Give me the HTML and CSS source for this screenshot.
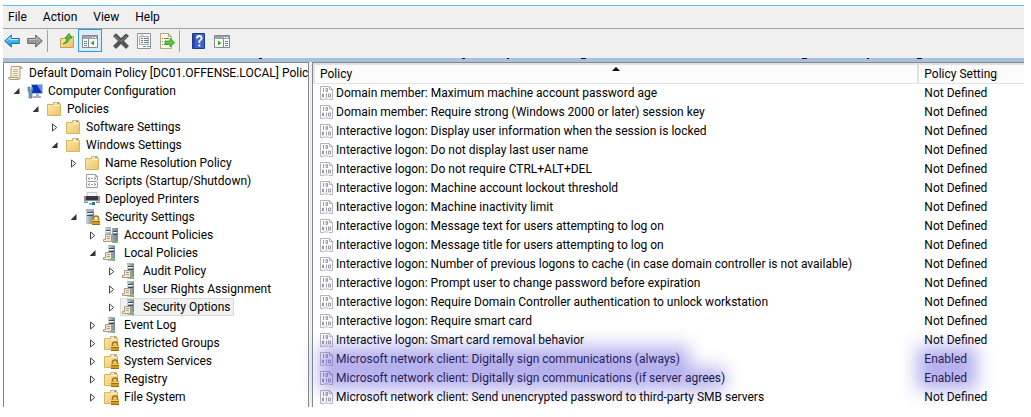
FILE: index.html
```html
<!DOCTYPE html>
<html lang="en">
<head>
<meta charset="utf-8">
<title>Group Policy Management Editor</title>
<link rel="stylesheet" href="styles.css">
</head>
<body>
<svg class="sprite" aria-hidden="true">
  <defs>
    <linearGradient id="gold" x1="0" y1="0" x2="1" y2="1"><stop offset="0" stop-color="#fdeab0"/><stop offset="1" stop-color="#e9c468"/></linearGradient>
    <linearGradient id="sky" x1="0" y1="0" x2="0" y2="1"><stop offset="0" stop-color="#7fd4ff"/><stop offset="1" stop-color="#148fdc"/></linearGradient>
    <linearGradient id="steel" x1="0" y1="0" x2="1" y2="0"><stop offset="0" stop-color="#c9d6dd"/><stop offset="1" stop-color="#71858f"/></linearGradient>
    <symbol id="folder" viewBox="0 0 16 16"><path d="M1.500 3.500h6v-2h6v2h1v11h-13z" fill="url(#gold)" stroke="#d9b261"/><path d="M9 2.500h4" stroke="#fff"/><path d="M11 2.500h2" stroke="#4aa3dc"/><path d="M8 4.500h6" stroke="#fff3c8"/></symbol>
    <symbol id="lock" viewBox="0 0 16 16"><path d="M9.500 11V9.500a2.500 2.500 0 0 1 5 0V11" fill="none" stroke="#a37414" stroke-width="1.500"/><path d="M8 10.500h8v5.500H8z" fill="#d69a1c"/><path d="M8 12.500h8M8 15.500h8" stroke="#9c6a10"/><path d="M8 11.500h8" stroke="#f4cf62"/></symbol>
    <symbol id="lockfolder" viewBox="0 0 16 16"><use href="#folder"/><use href="#lock"/></symbol>
    <symbol id="tower" viewBox="0 0 16 16"><path d="M2 0h8v15H2z" fill="url(#steel)"/><path d="M2 0h8v2H2z" fill="#a5b4bc"/><path d="M3 3.500h6M3 6.500h6" stroke="#43545e"/><path d="M3 4.500h6" stroke="#f5f9fb"/></symbol>
    <symbol id="security" viewBox="0 0 16 16"><use href="#tower"/><use href="#lock"/></symbol>
    <symbol id="paper" viewBox="0 0 16 16"><path d="M2.500 7.500h6v7h-8v-2h2z" fill="#f4ead0" stroke="#a59a80"/><path d="M4 9.500h3M4 11.500h3" stroke="#a59a80"/></symbol>
    <symbol id="server" viewBox="0 0 16 16"><path d="M5 0h7v16H5z" fill="url(#steel)"/><path d="M5 .5h7" stroke="#a5b4bc"/><path d="M6 3.500h5M6 6.500h5" stroke="#3e4d55"/><path d="M6 4.500h5" stroke="#fff"/><path d="M10 13h2v2h-2z" fill="#5fe02c"/><use href="#paper"/></symbol>
    <symbol id="servers" viewBox="0 0 16 16"><path d="M2 0h6v13H2zM9 1h6v15H9z" fill="url(#steel)"/><path d="M3 3.500h4M10 4.500h4M10 7.500h4" stroke="#3e4d55"/><path d="M3 4.500h4M10 5.500h4" stroke="#fff"/><path d="M13 14h2v2h-2z" fill="#5fe02c"/><use href="#paper"/></symbol>
    <symbol id="scroll" viewBox="0 0 16 16"><path d="M3.500 1.500h9q2 0 1.500 2h-2v9q0 2-2 2h-8q-2-.5-1.500-2h2.500v-9z" fill="#fbf3d8" stroke="#a99c78"/><path d="M12 3.500V1.500M2 14.500h8v-2H1" fill="none" stroke="#a99c78"/><path d="M5 4.500h5M5 6.500h5M5 8.500h5M5 10.500h5" stroke="#c2b48c"/></symbol>
    <symbol id="computer" viewBox="0 0 16 16"><path d="M4.500 1.500h11v9h-11z" fill="#0c2fc4" stroke="#b6c3d4"/><path d="M10 2h5v8z" fill="#5f8cf5"/><path d="M9 11h3v2H9zM6 13h8v2H6z" fill="#a8b1ba"/><path d="M1 4v4q0 1 1 1v6h3V9q1-1 1-2V4H5v3H3V4z" fill="#6aa4cd" stroke="#3b6486" stroke-width=".6"/></symbol>
    <symbol id="scripts" viewBox="0 0 16 16"><path d="M2.500 1.500h9l2 2v4l-1 1 1 1v5h-11v-5l1-1-1-1z" fill="#fff" stroke="#9a9a9a"/><path d="M11.500 1.500v2h2" fill="none" stroke="#9a9a9a"/><path d="M6 4.500l-2 1 2 1M10 4.500l2 1-2 1M7 5.500h2M6 10.500l-2 1 2 1M10 10.500l2 1-2 1M7 11.500h2M4 8.500h8" fill="none" stroke="#777" stroke-width=".8"/></symbol>
    <symbol id="printer" viewBox="0 0 16 16"><path d="M3 1.500h10V6H3z" fill="#f4f4f4" stroke="#aaa" stroke-width=".6"/><path d="M0 5h16v7H0z" fill="#8a8f94"/><path d="M2 5h12v4H2z" fill="#37393b"/><path d="M0 10.500h16" stroke="#c7cacc"/><path d="M4 10h8v5H4z" fill="#fff"/><path d="M5 12h3v2H5z" fill="#5bc3e8"/><path d="M8 11h3v3H8z" fill="#2278bd"/></symbol>
    <symbol id="binary" viewBox="0 0 14 14"><path d="M.5.500h9l3 3v10H9l-1-1-1.500 1-1.500-1-1.500 1H.5z" fill="#fff" stroke="#b3b3b8"/><path d="M9.500.500v3h3" fill="none" stroke="#b3b3b8"/><path d="M3.500 2v4M3.500 8h-1v3h1zM6 2.500h1.500v3H6zM6.500 7.500v4M8.500 8h2v3h-2z" fill="none" stroke="#9a97b0"/></symbol>
    <symbol id="back" viewBox="0 0 16 16"><path d="M.7 8l6.600-6v3.500h8v5h-8V14z" fill="url(#sky)" stroke="#1672ab"/><path d="M3 7.500l3.300-3v2h8" fill="none" stroke="#b9e8ff"/></symbol>
    <symbol id="forward" viewBox="0 0 16 16"><path d="M15.300 8L8.700 2v3.500h-8v5h8V14z" fill="#999" stroke="#686868"/><path d="M1.700 6.500h8v-2l3 3" fill="none" stroke="#c4c4c4"/></symbol>
    <symbol id="up" viewBox="0 0 16 16"><path d="M1.500 5.500h7l1-2h5v11h-13z" fill="url(#gold)" stroke="#cfa04a"/><path d="M4 11q4-2 4-6H6l4-4.500L13 5h-2.500Q10 10 4 11z" fill="#56c92c" stroke="#278d17" stroke-width=".8"/></symbol>
    <symbol id="paneleft" viewBox="0 0 16 16"><path d="M.5 2.500h15v12H.5z" fill="#fff" stroke="#85898d"/><path d="M1 3h14v3H1z" fill="#9da3a8"/><path d="M10 4.500h1M12 4.500h2" stroke="#fff"/><path d="M6.500 6v8" stroke="#85898d"/><path d="M2 8.500h3M2 10.500h3M2 12.500h3" stroke="#5e86a8"/><path d="M12 7.500v5L8.500 10z" fill="#2fae22"/></symbol>
    <symbol id="paneright" viewBox="0 0 16 16"><path d="M.5 2.500h15v12H.5z" fill="#fff" stroke="#85898d"/><path d="M1 3h14v3H1z" fill="#9da3a8"/><path d="M10 4.500h1M12 4.500h2" stroke="#fff"/><path d="M9.500 6v8" stroke="#85898d"/><path d="M11 8.500h3M11 10.500h3M11 12.500h3" stroke="#5e86a8"/><path d="M4 7.500v5L7.500 10z" fill="#2fae22"/></symbol>
    <symbol id="delete" viewBox="0 0 16 16"><path d="M.5 3L3 .8 8 5.500 13 1l2.500 2-5 5 5 5L13 15.500l-5-5-5 5L.5 13l5-5z" fill="#555" stroke="#333" stroke-width=".7"/><path d="M2 3l6 5.500L14 3" fill="none" stroke="#8a8a8a"/></symbol>
    <symbol id="properties" viewBox="0 0 16 16"><path d="M1.500.5h13v15h-13z" fill="#fff" stroke="#8d9195"/><path d="M3.500 3.500h9v8h-9z" fill="#f6f7f8" stroke="#a7abb0"/><path d="M4 2h4" stroke="#bbb"/><path d="M5 5.500h2M8 5.500h4M5 7.500h2M8 7.500h4M5 9.500h2M8 9.500h4" stroke="#74797e"/><path d="M7 13.500h3M11 13.500h3" stroke="#32a8e0"/></symbol>
    <symbol id="export" viewBox="0 0 16 16"><path d="M1.500.5h8l3 3v12h-11z" fill="#fffbe6" stroke="#b3a77e"/><path d="M9.500.5v3h3" fill="none" stroke="#b3a77e"/><path d="M3 5.500h1M5 5.500h5M3 8.500h1M3 11.500h1M5 11.500h4" stroke="#777"/><path d="M6 8h5V5.500l4.700 4.200L11 14v-2.500H6z" fill="#5acb37" stroke="#2d9a1e" stroke-width=".8"/></symbol>
    <symbol id="help" viewBox="0 0 16 16"><path d="M1.500.5h12v15h-12z" fill="#3e64cc" stroke="#1c3a93"/><path d="M2 1h2v14H2z" fill="#284ba8"/><path d="M6 5.500Q6 3 8.300 3t2.300 2.300Q10.600 7 8.400 8v2M8.400 11.500v2" fill="none" stroke="#fff" stroke-width="1.800"/></symbol>
  </defs>
</svg>

<div class="window">
  <nav class="menu" aria-label="Menu">
    <button>File</button><button>Action</button><button>View</button><button>Help</button>
  </nav>
  <div class="toolbar" role="toolbar" aria-label="Tools">
    <button aria-label="Back"><svg class="icon"><use href="#back"/></svg></button>
    <button aria-label="Forward"><svg class="icon"><use href="#forward"/></svg></button>
    <span class="sep"></span>
    <button aria-label="Up one level"><svg class="icon"><use href="#up"/></svg></button>
    <button class="pressed" aria-label="Show console tree" aria-pressed="true"><svg class="icon"><use href="#paneleft"/></svg></button>
    <button aria-label="Delete"><svg class="icon"><use href="#delete"/></svg></button>
    <button aria-label="Properties"><svg class="icon"><use href="#properties"/></svg></button>
    <button aria-label="Export list"><svg class="icon"><use href="#export"/></svg></button>
    <span class="sep"></span>
    <button aria-label="Help topics"><svg class="icon"><use href="#help"/></svg></button>
    <button aria-label="Show action pane"><svg class="icon"><use href="#paneright"/></svg></button>
  </div>
  <svg class="strip" aria-hidden="true"><path d="M256 .5h3M459 .5h3M504 .5h2M578 .5h5M799 .5h5M864 .5h2M914 .5h5" stroke="#111"/></svg>

  <main class="panes">
    <section class="tree" aria-label="Console tree">
      <ul>
        <li><div class="node root"><svg class="icon"><use href="#scroll"/></svg><span>Default Domain Policy [DC01.OFFENSE.LOCAL] Policy</span></div>
        <ul>
          <li><div class="node"><button class="twist open" aria-label="Collapse"></button><svg class="icon"><use href="#computer"/></svg><span>Computer Configuration</span></div>
          <ul>
            <li><div class="node"><button class="twist open" aria-label="Collapse"></button><svg class="icon"><use href="#folder"/></svg><span>Policies</span></div>
            <ul>
              <li><div class="node"><button class="twist" aria-label="Expand"></button><svg class="icon"><use href="#folder"/></svg><span>Software Settings</span></div></li>
              <li><div class="node"><button class="twist open" aria-label="Collapse"></button><svg class="icon"><use href="#folder"/></svg><span>Windows Settings</span></div>
              <ul>
                <li><div class="node"><button class="twist" aria-label="Expand"></button><svg class="icon"><use href="#folder"/></svg><span>Name Resolution Policy</span></div></li>
                <li><div class="node leaf"><svg class="icon"><use href="#scripts"/></svg><span>Scripts (Startup/Shutdown)</span></div></li>
                <li><div class="node leaf"><svg class="icon"><use href="#printer"/></svg><span>Deployed Printers</span></div></li>
                <li><div class="node"><button class="twist open" aria-label="Collapse"></button><svg class="icon"><use href="#security"/></svg><span>Security Settings</span></div>
                <ul>
                  <li><div class="node"><button class="twist" aria-label="Expand"></button><svg class="icon"><use href="#servers"/></svg><span>Account Policies</span></div></li>
                  <li><div class="node"><button class="twist open" aria-label="Collapse"></button><svg class="icon"><use href="#server"/></svg><span>Local Policies</span></div>
                  <ul>
                    <li><div class="node"><button class="twist" aria-label="Expand"></button><svg class="icon"><use href="#server"/></svg><span>Audit Policy</span></div></li>
                    <li><div class="node"><button class="twist" aria-label="Expand"></button><svg class="icon"><use href="#server"/></svg><span>User Rights Assignment</span></div></li>
                    <li><div class="node"><button class="twist" aria-label="Expand"></button><div class="selected"><svg class="icon"><use href="#server"/></svg><span>Security Options</span></div></div></li>
                  </ul></li>
                  <li><div class="node"><button class="twist" aria-label="Expand"></button><svg class="icon"><use href="#server"/></svg><span>Event Log</span></div></li>
                  <li><div class="node"><button class="twist" aria-label="Expand"></button><svg class="icon"><use href="#lockfolder"/></svg><span>Restricted Groups</span></div></li>
                  <li><div class="node"><button class="twist" aria-label="Expand"></button><svg class="icon"><use href="#lockfolder"/></svg><span>System Services</span></div></li>
                  <li><div class="node"><button class="twist" aria-label="Expand"></button><svg class="icon"><use href="#lockfolder"/></svg><span>Registry</span></div></li>
                  <li><div class="node"><button class="twist" aria-label="Expand"></button><svg class="icon"><use href="#lockfolder"/></svg><span>File System</span></div></li>
                </ul></li>
              </ul></li>
            </ul></li>
          </ul></li>
        </ul></li>
      </ul>
    </section>

    <section class="list" aria-label="Policies">
      <table>
        <thead><tr><th class="name" aria-sort="ascending">Policy<svg class="sort" viewBox="0 0 8 4"><path d="M0 4L4 0l4 4z"/></svg></th><th>Policy Setting</th></tr></thead>
        <tbody>
          <tr><td><svg class="doc"><use href="#binary"/></svg>Domain member: Maximum machine account password age</td><td>Not Defined</td></tr>
          <tr><td><svg class="doc"><use href="#binary"/></svg>Domain member: Require strong (Windows 2000 or later) session key</td><td>Not Defined</td></tr>
          <tr><td><svg class="doc"><use href="#binary"/></svg>Interactive logon: Display user information when the session is locked</td><td>Not Defined</td></tr>
          <tr><td><svg class="doc"><use href="#binary"/></svg>Interactive logon: Do not display last user name</td><td>Not Defined</td></tr>
          <tr><td><svg class="doc"><use href="#binary"/></svg>Interactive logon: Do not require CTRL+ALT+DEL</td><td>Not Defined</td></tr>
          <tr><td><svg class="doc"><use href="#binary"/></svg>Interactive logon: Machine account lockout threshold</td><td>Not Defined</td></tr>
          <tr><td><svg class="doc"><use href="#binary"/></svg>Interactive logon: Machine inactivity limit</td><td>Not Defined</td></tr>
          <tr><td><svg class="doc"><use href="#binary"/></svg>Interactive logon: Message text for users attempting to log on</td><td>Not Defined</td></tr>
          <tr><td><svg class="doc"><use href="#binary"/></svg>Interactive logon: Message title for users attempting to log on</td><td>Not Defined</td></tr>
          <tr><td><svg class="doc"><use href="#binary"/></svg>Interactive logon: Number of previous logons to cache (in case domain controller is not available)</td><td>Not Defined</td></tr>
          <tr><td><svg class="doc"><use href="#binary"/></svg>Interactive logon: Prompt user to change password before expiration</td><td>Not Defined</td></tr>
          <tr><td><svg class="doc"><use href="#binary"/></svg>Interactive logon: Require Domain Controller authentication to unlock workstation</td><td>Not Defined</td></tr>
          <tr><td><svg class="doc"><use href="#binary"/></svg>Interactive logon: Require smart card</td><td>Not Defined</td></tr>
          <tr><td><svg class="doc"><use href="#binary"/></svg>Interactive logon: Smart card removal behavior</td><td>Not Defined</td></tr>
          <tr><td><svg class="doc"><use href="#binary"/></svg>Microsoft network client: Digitally sign communications (always)</td><td>Enabled</td></tr>
          <tr><td><svg class="doc"><use href="#binary"/></svg>Microsoft network client: Digitally sign communications (if server agrees)</td><td>Enabled</td></tr>
          <tr><td><svg class="doc"><use href="#binary"/></svg>Microsoft network client: Send unencrypted password to third-party SMB servers</td><td>Not Defined</td></tr>
        </tbody>
      </table>
      <div class="marker marker-name"><i></i><i></i></div>
      <div class="marker marker-value"><i></i><i></i></div>
    </section>
  </main>
</div>
</body>
</html>
```
FILE: styles.css
```css
* { box-sizing: border-box; }
body {
  margin: 0;
  padding: 5px 7px 10px 3px;
  background: #fff;
  color: #000;
  font: 12px/18px Roboto, "Open Sans", sans-serif;
}
button { margin: 0; padding: 0; border: 0; background: none; font: inherit; color: inherit; }
ul { margin: 0; padding: 0; list-style: none; }
.sprite { position: absolute; width: 0; height: 0; }
.icon { display: block; flex: none; width: 16px; height: 16px; }

.window { border-top: 1px solid #5fc0ea; background: #f0f0f0; }
.menu { display: flex; gap: 16px; height: 23px; padding: 0 5px; border-bottom: 1px solid #a0a0a0; }
.toolbar { display: flex; align-items: center; height: 29px; padding-bottom: 6px; }
.toolbar button { display: flex; align-items: center; justify-content: center; width: 17px; height: 23px; margin-right: 6px; }
.toolbar .pressed { width: 24px; margin: 0 10px 0 -3px; border: 1px solid #2a9bdc; background: #d9ecf8; }
.sep { width: 1px; height: 22px; margin: 0 10px 0 -2px; background: #a0a0a0; }
.strip { display: block; width: 100%; height: 4px; background: #a6c0dd; }

.panes { display: flex; gap: 3px; }
.tree {
  flex: none;
  width: 306px;
  padding: 1px 0 0 4px;
  overflow: hidden;
  border: solid #828790;
  border-width: 1px 1px 0;
  background: #fff;
}
.tree ul ul { padding-left: 19px; }
.tree ul ul .node { margin-left: -19px; }
.tree .node.leaf { padding-left: 19px; }
.node, .selected { display: flex; align-items: center; gap: 5px; height: 18px; white-space: nowrap; }
.twist { display: flex; align-items: center; justify-content: center; width: 19px; height: 18px; margin-right: -5px; padding-right: 2px; }
.twist::before {
  content: "";
  width: 6px;
  height: 9px;
  background: url("data:image/svg+xml,%3Csvg xmlns='http://www.w3.org/2000/svg' viewBox='0 0 6 9'%3E%3Cpath d='M.5 1v7L4.800 4.500z' fill='%23fff' stroke='%23444'/%3E%3C/svg%3E") no-repeat;
}
.twist.open::before { height: 6px; background: #333; clip-path: polygon(100% 0, 100% 100%, 0 100%); }
.selected { margin-left: -2px; padding: 0 3px 0 1px; border: 1px solid #d9d9d9; background: #f0f0f0; }

.list { position: relative; flex: 1; min-width: 0; border: solid #828790; border-width: 1px 0 0 1px; background: #fff; }
table { width: 100%; table-layout: fixed; border-spacing: 0; }
th { height: 21px; padding: 0 5px; border: solid #e2e2e2; border-width: 2px 0 1px 2px; background: #fcfcfc; font-weight: 400; text-align: left; line-height: 16px; }
.name { position: relative; width: 85%; }
.sort { position: absolute; top: 2px; left: 50%; width: 8px; height: 4px; margin-left: -4px; }
td { height: 19px; padding: 0 7px; line-height: 19px; white-space: nowrap; }
.doc { width: 14px; height: 14px; margin-right: 2px; vertical-align: -3px; }

/* Soft violet highlighter over the two enabled policies */
.marker { position: absolute; bottom: 17px; opacity: .44; filter: blur(9px); pointer-events: none; }
.marker i { display: block; height: 22px; background: #5a50d7; }
.marker-name { left: 6px; width: 406px; }
.marker-name i:first-child { width: 370px; }
.marker-value { left: 85%; width: 60px; }
```
